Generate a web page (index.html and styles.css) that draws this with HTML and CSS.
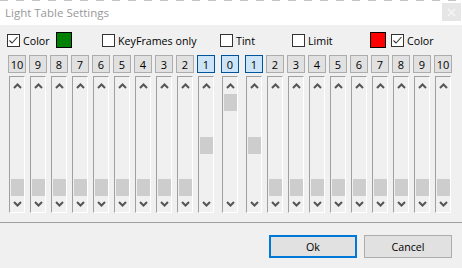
FILE: index.html
```html
<!DOCTYPE html>
<html>
<head>
<meta charset="utf-8">
<link rel="stylesheet" href="styles.css">
</head>
<body>
<div class="window">
  <div class="titlebar">
    <span class="title">Light Table Settings</span>
    <span class="close"><svg width="9" height="9" viewBox="0 0 9 9"><path d="M1 1L8 8M8 1L1 8" stroke="#f7f7f7" stroke-width="1.3" fill="none"/></svg></span>
  </div>
  <div class="content">
    <div class="options">
      <label class="opt"><span class="cb"><svg width="11" height="11" viewBox="0 0 11 11"><path d="M1.5 5.5L4 8L9.5 2" stroke="#333" stroke-width="1.1" fill="none"/></svg></span><span class="txt">Color</span></label>
      <span class="swatch green"></span>
      <label class="opt"><span class="cb"></span><span class="txt">KeyFrames only</span></label>
      <label class="opt"><span class="cb"></span><span class="txt">Tint</span></label>
      <label class="opt"><span class="cb"></span><span class="txt">Limit</span></label>
      <span class="swatch red"></span>
      <label class="opt"><span class="cb"><svg width="11" height="11" viewBox="0 0 11 11"><path d="M1.5 5.5L4 8L9.5 2" stroke="#333" stroke-width="1.1" fill="none"/></svg></span><span class="txt">Color</span></label>
    </div>
    <div class="columns" id="columns"></div>
    <div class="sep"></div>
    <div class="buttons">
      <button class="btn default">Ok</button>
      <button class="btn">Cancel</button>
    </div>
  </div>
</div>
<script src="app.js"></script>
</body>
</html>
```
FILE: styles.css
```css
* { box-sizing: border-box; }
html, body { margin: 0; padding: 0; }
body {
  background: #f0f0f0;
  font-family: "Open Sans", "Noto Sans", sans-serif;
  font-size: 10.7px;
  color: #000;
}
.window {
  width: 462px;
  height: 268px;
  overflow: hidden;
  background: #f0f0f0;
  display: flex;
  flex-direction: column;
}
.titlebar {
  height: 25px;
  flex: none;
  background: repeating-linear-gradient(to right, #c4c4c4 0 8px, transparent 8px 16px) top left / 100% 1px no-repeat, #fff;
  display: flex;
  align-items: flex-start;
  justify-content: space-between;
}
.title {
  color: #999;
  font-size: 11.5px;
  padding-left: 5px;
  line-height: 25px;
}
.close {
  margin-top: 3px;
  margin-right: 1px;
  width: 19px;
  height: 18px;
  background: #e6e6e6;
  display: flex;
  align-items: center;
  justify-content: center;
}
.content {
  flex: 1;
  display: flex;
  flex-direction: column;
}
.options {
  margin-top: 7px;
  height: 16px;
  padding-left: 7px;
  display: grid;
  grid-template-columns: 49px 46px 118px 72px 78px 21px auto;
  align-items: center;
}
.opt {
  display: flex;
  align-items: center;
  gap: 3px;
  white-space: nowrap;
}
.txt { padding-top: 2px; }
.cb {
  width: 13px;
  height: 13px;
  border: 1px solid #333;
  background: #fff;
  display: flex;
  align-items: center;
  justify-content: center;
}
.swatch {
  width: 16px;
  height: 16px;
  border: 1px solid #000;
}
.swatch.green { background: #008000; }
.swatch.red { background: #ff0000; }
.columns {
  margin-top: 7px;
  padding-left: 8px;
  display: flex;
  gap: 3px;
}
.col {
  width: 18px;
  display: flex;
  flex-direction: column;
  gap: 3px;
}
.col.zero { margin: 0 3px; }
.num {
  width: 18px;
  height: 18px;
  border: 1px solid #adadad;
  background: #e1e1e1;
  display: flex;
  align-items: center;
  justify-content: center;
  line-height: 1;
  font-size: 11px;
}
.num.sel {
  border-color: #005499;
  background: #cce4f7;
}
.slider {
  margin-left: 1px;
  width: 16px;
  height: 137px;
  border-top: 1px solid #a0a0a0;
  border-left: 1px solid #a0a0a0;
  border-right: 1px solid #fff;
  border-bottom: 1px solid #fff;
  display: flex;
  flex-direction: column;
}
.arrow {
  display: flex;
  align-items: center;
  justify-content: center;
  padding-left: 1px;
}
.arrow.up { height: 17px; }
.arrow.down { height: 16px; }
.track { flex: 1; }
.thumb {
  margin-left: 1px;
  width: 13px;
  height: 17px;
  background: #cdcdcd;
}
.thumb.top { margin-top: 0; }
.thumb.mid { margin-top: 43px; }
.thumb.bottom { margin-top: 85px; }
.sep {
  margin-top: 9px;
  height: 1px;
  background: #a0a0a0;
}
.buttons {
  margin-top: 12px;
  display: flex;
  justify-content: flex-end;
  gap: 7px;
  padding-right: 10px;
}
.btn {
  width: 88px;
  height: 23px;
  border: 1px solid #adadad;
  background: #e1e1e1;
  font-family: inherit;
  font-size: 10.7px;
  color: #000;
  padding: 0;
}
.btn.default { border: 2px solid #0078d7; }
```
FILE: app.js
```js
var vals = [10,9,8,7,6,5,4,3,2,1,0,1,2,3,4,5,6,7,8,9,10];
var up = '<svg width="9" height="6" viewBox="0 0 9 6"><path d="M1 5L4.5 1.5L8 5" stroke="#555" stroke-width="2" fill="none"/></svg>';
var down = '<svg width="9" height="6" viewBox="0 0 9 6"><path d="M1 1L4.5 4.5L8 1" stroke="#555" stroke-width="2" fill="none"/></svg>';
var html = '';
vals.forEach(function (v) {
  var pos = v === 0 ? 'top' : (v === 1 ? 'mid' : 'bottom');
  var sel = v <= 1 ? ' sel' : '';
  var zero = v === 0 ? ' zero' : '';
  html += '<div class="col' + zero + '"><span class="num' + sel + '">' + v + '</span>' +
    '<div class="slider"><div class="arrow up">' + up + '</div><div class="track"><div class="thumb ' + pos + '"></div></div><div class="arrow down">' + down + '</div></div></div>';
});
document.getElementById('columns').innerHTML = html;
```
